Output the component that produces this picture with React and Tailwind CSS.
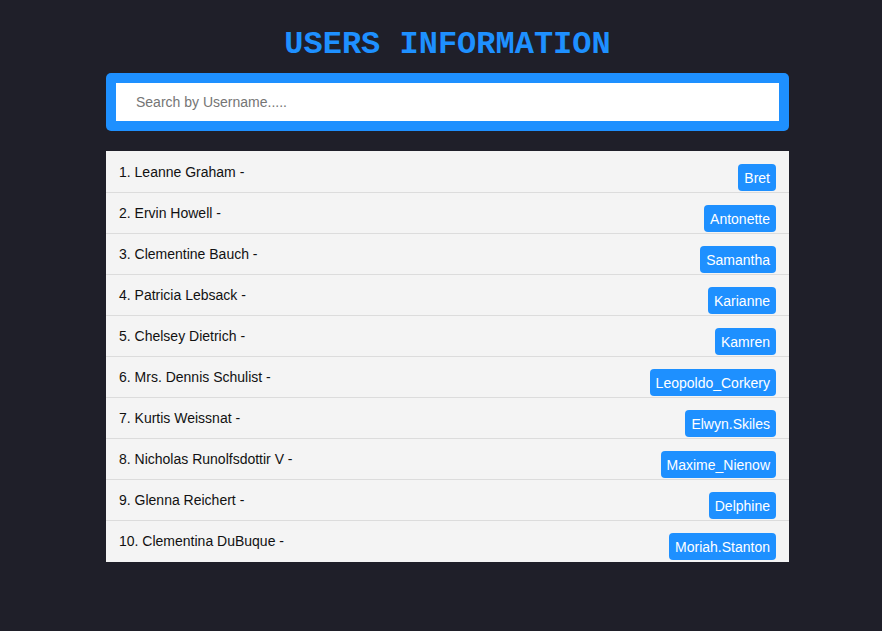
import React from "react";

const users = [
  { name: "Leanne Graham", username: "Bret" },
  { name: "Ervin Howell", username: "Antonette" },
  { name: "Clementine Bauch", username: "Samantha" },
  { name: "Patricia Lebsack", username: "Karianne" },
  { name: "Chelsey Dietrich", username: "Kamren" },
  { name: "Mrs. Dennis Schulist", username: "Leopoldo_Corkery" },
  { name: "Kurtis Weissnat", username: "Elwyn.Skiles" },
  { name: "Nicholas Runolfsdottir V", username: "Maxime_Nienow" },
  { name: "Glenna Reichert", username: "Delphine" },
  { name: "Clementina DuBuque", username: "Moriah.Stanton" },
];

export default function App() {
  return (
    <div className="min-h-[631px] bg-[#1f1f29] font-['Liberation_Sans',Arial,sans-serif]">
      <div className="w-[683px] ml-[106px] pt-[27px]">
        {/* Title */}
        <h1 className="text-center text-[32px] leading-[36px] font-bold text-[#1e90ff] font-['Liberation_Mono','Courier_New',monospace]">
          USERS INFORMATION
        </h1>

        {/* Search */}
        <div className="mt-[10px] bg-[#1e90ff] rounded-[5px] p-[10px]">
          <input
            type="text"
            placeholder="Search by Username....."
            className="w-full h-[38px] bg-white px-[20px] text-[14px] text-[#333] placeholder:text-[#757575] outline-none"
          />
        </div>

        {/* List */}
        <ul className="mt-[20px] pt-[1px] bg-[#f4f4f4]">
          {users.map((u, i) => (
            <li
              key={u.username}
              className="flex justify-between h-[41px] border-b border-[#dcdcdc] last:border-[#f4f4f4] pl-[13px] pr-[13px]"
            >
              <span className="text-[14px] text-[#111] leading-[40px]">
                {i + 1}. {u.name} -
              </span>
              <span className="mt-[12px] h-[27px] leading-[28px] px-[6px] rounded-[4px] bg-[#1e90ff] text-white text-[14px]">
                {u.username}
              </span>
            </li>
          ))}
        </ul>
      </div>
    </div>
  );
}
